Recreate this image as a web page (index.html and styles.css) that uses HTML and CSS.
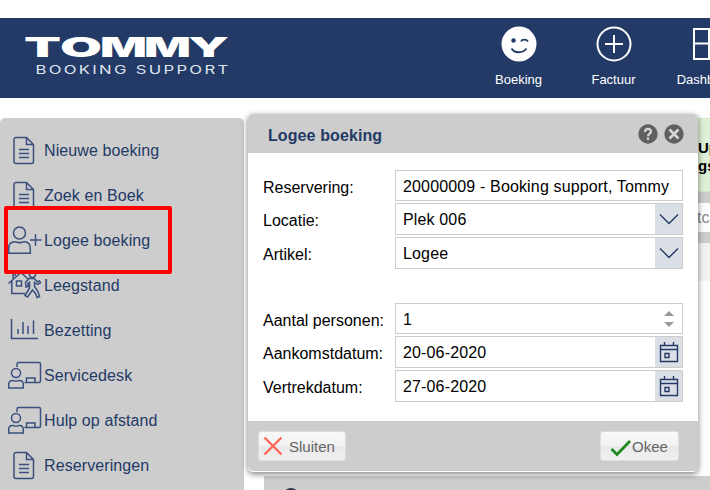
FILE: index.html
```html
<!DOCTYPE html>
<html lang="nl">
  <head>
    <meta charset="UTF-8" />
    <meta name="viewport" content="width=device-width, initial-scale=1.0" />
    <title>Tommy Booking Support</title>
    <link rel="stylesheet" href="styles.css">
  </head>
  <body>
    <svg class="sprite">
      <symbol id="icon-doc" viewBox="0 0 34 34">
        <path d="M18.500 3.500H8a2 2 0 0 0-2 2v22a2 2 0 0 0 2 2h15.500a2 2 0 0 0 2-2V10.500zM18.500 3.500v7h7M11 15.500h10M11 19.500h10M11 23.500h10" />
      </symbol>
      <symbol id="icon-guest" viewBox="0 0 34 34">
        <circle cx="11.500" cy="9" r="6" />
        <path d="M.7 29.300v-4.500c0-5.500 2.500-7 6-7 2 0 3 1 4.800 1s2.800-1 4.800-1c3.500 0 6 1.500 6 7v4.500zM22 16h11.500M27.500 10.300v11.500" />
      </symbol>
      <symbol id="icon-house" viewBox="0 0 34 34">
        <path d="M.5 14.500L13 3.500l7 6.500M3.800 12v12.500H17M8.500 12h5v5h-5zM5 9.500V6h3" />
        <circle cx="24.500" cy="5.500" r="3" />
        <path d="M21 9.500l-3.500 4 .5 4.500 2-.5v-3l1.500-1V19l-4.500 7.500 2.500 1.500 5-7 3 3.500 1.500 4 2.500-1-1.500-5-3.500-5v-4l3 2 3-1.500-1-2-2 .8-3.500-3.300z" />
      </symbol>
      <symbol id="icon-chart" viewBox="0 0 34 34">
        <path d="M3.500 5v19.500h26.500M10 15v5M15 8v12M20 12v8M25.500 6.500V20" />
      </symbol>
      <symbol id="icon-desk" viewBox="0 0 34 34">
        <path d="M9 8V5a1.500 1.500 0 0 1 1.500-1.500H31A1.500 1.500 0 0 1 32.500 5v17a1.500 1.500 0 0 1-1.500 1.500H16.500M18.500 23v-4h8.500v4" />
        <circle cx="8" cy="14" r="4.500" />
        <path d="M.7 29v-3.500c0-3 1.500-4 4-4 1.500 0 2 .7 3.300.7s1.800-.7 3.300-.7c2.500 0 4 1 4 4V29z" />
      </symbol>
      <symbol id="icon-calendar" viewBox="0 0 20 22">
        <path d="M1.500 4.500h17v16h-17zM1 8.500h18M5.500 1v3M14.500 1v3M6 12.500h4v4H6z" />
      </symbol>
    </svg>

    <header class="topbar">
      <svg class="logo" viewBox="0 0 210 42">
        <text class="logo-name" y="21"><tspan x="4" textLength="37" lengthAdjust="spacingAndGlyphs">T</tspan><tspan x="40" textLength="42" lengthAdjust="spacingAndGlyphs">O</tspan><tspan x="80" textLength="47" lengthAdjust="spacingAndGlyphs">M</tspan><tspan x="124" textLength="47" lengthAdjust="spacingAndGlyphs">M</tspan><tspan x="168" textLength="41" lengthAdjust="spacingAndGlyphs">Y</tspan></text>
        <text class="logo-sub" x="15.500" y="38.300" textLength="195" lengthAdjust="spacingAndGlyphs">BOOKING SUPPORT</text>
      </svg>
      <nav class="topnav">
        <a class="topnav-item">
          <svg width="36" height="36" viewBox="0 0 36 36">
            <circle cx="18" cy="18" r="17.500" fill="#fff" />
            <circle cx="12.500" cy="14.500" r="2.200" fill="#233a66" />
            <path d="M20 15.500c1-2.400 5.500-2.400 7 0M10.500 22.500c3 5 11.500 5 15 0" fill="none" stroke="#233a66" stroke-width="1.800" />
          </svg>
          <span>Boeking</span>
        </a>
        <a class="topnav-item">
          <svg width="36" height="36" viewBox="0 0 36 36">
            <circle cx="18" cy="18" r="16.500" fill="none" stroke="#fff" stroke-width="2" />
            <path d="M18 9v18M9 18h18" fill="none" stroke="#fff" stroke-width="2" />
          </svg>
          <span>Factuur</span>
        </a>
        <a class="topnav-item">
          <svg width="36" height="36" viewBox="0 0 36 36">
            <path d="M3 3h30v30H3zM18 3v30M3 17.500h30" fill="none" stroke="#fff" stroke-width="2" />
          </svg>
          <span>Dashboard</span>
        </a>
      </nav>
    </header>

    <div class="page">
      <aside class="sidebar">
        <a class="menu-item"><svg><use href="#icon-doc" /></svg>Nieuwe boeking</a>
        <a class="menu-item"><svg><use href="#icon-doc" /></svg>Zoek en Boek</a>
        <a class="menu-item"><svg><use href="#icon-guest" /></svg>Logee boeking</a>
        <a class="menu-item"><svg><use href="#icon-house" /></svg>Leegstand</a>
        <a class="menu-item"><svg><use href="#icon-chart" /></svg>Bezetting</a>
        <a class="menu-item"><svg><use href="#icon-desk" /></svg>Servicedesk</a>
        <a class="menu-item"><svg><use href="#icon-desk" /></svg>Hulp op afstand</a>
        <a class="menu-item"><svg><use href="#icon-doc" /></svg>Reserveringen</a>
        <div class="highlight"></div>
      </aside>

      <main class="content">
        <div class="notice">Up<br>gs</div>
        <div class="filter"><div class="filter-input">tc</div></div>
        <div class="subbar"></div>
        <div class="panel"><span class="panel-icon"></span></div>
      </main>
    </div>

    <form class="dialog">
      <div class="dialog-header">
        <h2 class="dialog-title">Logee boeking</h2>
        <svg class="dialog-tool" viewBox="0 0 20 20">
          <circle cx="10" cy="10" r="9.700" fill="#606060" />
          <path d="M7 8c0-4 6-4 6-.6 0 2.200-3 2.200-3 4.800M10 13.600v2.400" fill="none" stroke="#d8d8d8" stroke-width="2.200" />
        </svg>
        <svg class="dialog-tool" viewBox="0 0 20 20">
          <circle cx="10" cy="10" r="9.700" fill="#606060" />
          <path d="M5.500 5.500l9 9M14.500 5.500l-9 9" fill="none" stroke="#d8d8d8" stroke-width="2.600" />
        </svg>
      </div>
      <div class="dialog-body">
        <div class="field field-text">
          <label>Reservering:</label>
          <div class="field-box"><span>20000009 - Booking support, Tommy</span></div>
        </div>
        <div class="field">
          <label>Locatie:</label>
          <div class="field-box"><span>Plek 006</span>
            <i class="trigger"><svg width="20" height="12" viewBox="0 0 20 12"><path d="M1 1.500l9 9 9-9" /></svg></i>
          </div>
        </div>
        <div class="field">
          <label>Artikel:</label>
          <div class="field-box"><span>Logee</span>
            <i class="trigger"><svg width="20" height="12" viewBox="0 0 20 12"><path d="M1 1.500l9 9 9-9" /></svg></i>
          </div>
        </div>
        <div class="field field-text field-spaced">
          <label>Aantal personen:</label>
          <div class="field-box"><span>1</span>
            <i class="spinner"></i>
          </div>
        </div>
        <div class="field">
          <label>Aankomstdatum:</label>
          <div class="field-box"><span>20-06-2020</span>
            <i class="trigger"><svg width="20" height="22"><use href="#icon-calendar" /></svg></i>
          </div>
        </div>
        <div class="field">
          <label>Vertrekdatum:</label>
          <div class="field-box"><span>27-06-2020</span>
            <i class="trigger"><svg width="20" height="22"><use href="#icon-calendar" /></svg></i>
          </div>
        </div>
      </div>
      <div class="dialog-footer">
        <button type="button" class="button button-close">
          <svg width="20" height="20" viewBox="0 0 20 20"><path d="M1.500 1.500l17 17M18.500 1.500l-17 17" fill="none" stroke="#ff6557" stroke-width="2.300" /></svg>
          Sluiten
        </button>
        <button type="button" class="button button-ok">
          <svg width="22" height="18" viewBox="0 0 22 18"><path d="M1.500 10l5.500 5.500L20 2" fill="none" stroke="#1f8a1f" stroke-width="2.800" /></svg>
          Okee
        </button>
      </div>
    </form>
  </body>
</html>
```

FILE: styles.css
```css
* {
  box-sizing: border-box;
}

body {
  position: relative;
  margin: 0;
  padding-top: 18px;
  width: 710px;
  height: 490px;
  overflow: hidden;
  font-family: "Liberation Sans", Arial, sans-serif;
  font-size: 16px;
  background: #fff;
}

.sprite {
  display: none;
}

/* top bar */
.topbar {
  display: flex;
  height: 80px;
  background: #233a66;
}

.logo {
  flex: none;
  width: 210px;
  height: 42px;
  margin: 18px 0 0 20px;
  overflow: visible;
  fill: #fff;
}

.logo-name {
  font-family: Inter, "Open Sans", sans-serif;
  font-size: 27px;
  font-weight: 900;
}

.logo-sub {
  font-family: Inter, sans-serif;
  font-size: 11.5px;
  letter-spacing: 1.6px;
  fill: #dfe4ee;
}

.topnav {
  display: flex;
  flex: none;
  margin-left: 241px;
}

.topnav-item {
  display: flex;
  flex-direction: column;
  align-items: center;
  width: 95px;
  padding-top: 8px;
  gap: 10px;
  color: #fff;
  font-size: 13px;
  line-height: 15px;
}

/* page */
.page {
  display: flex;
  height: 372px;
  margin-top: 20px;
}

.sidebar {
  position: relative;
  flex: none;
  width: 244px;
  padding: 10px 0 0 8px;
  background: #cdcdcd;
  border-radius: 5px 5px 0 0;
}

.menu-item {
  display: flex;
  align-items: center;
  gap: 2px;
  height: 45px;
  color: #233a66;
  letter-spacing: 0.1px;
}

.menu-item svg {
  width: 34px;
  height: 34px;
  fill: none;
  stroke: #3a4f7e;
  stroke-width: 1.5;
}

.highlight {
  position: absolute;
  left: 4px;
  top: 88px;
  width: 168px;
  height: 68px;
  border: 4px solid #f00;
  border-radius: 2px;
}

.content {
  flex: 1;
  display: flex;
  flex-direction: column;
  margin-left: 20px;
}

.notice {
  height: 74px;
  padding: 20px 0 0 433px;
  border: 1px solid #d0e6c2;
  background: #dff0d8;
  font-size: 15px;
  font-weight: bold;
  line-height: 18px;
}

.filter {
  height: 51px;
  padding: 11px 0;
  background: #cdcdcd;
}

.filter-input {
  height: 29px;
  padding-left: 433px;
  background: #fff;
  color: #888;
  line-height: 30px;
}

.subbar {
  height: 38px;
  background: #f3f3f3;
}

.panel {
  height: 14px;
  margin-top: auto;
  padding: 12px 0 0 19px;
  overflow: hidden;
  background: #cdcdcd;
}

.panel-icon {
  display: block;
  width: 16px;
  height: 16px;
  border-radius: 50%;
  background: #30384c;
}

/* dialog */
.dialog {
  position: absolute;
  left: 248px;
  top: 114px;
  width: 450px;
  height: 358px;
  border-bottom: 1px solid #fff;
  border-radius: 5px;
  background: #fff;
  box-shadow: 0 2px 6px rgba(0, 0, 0, 0.5);
}

.dialog-header {
  display: flex;
  align-items: center;
  gap: 6px;
  height: 39px;
  padding: 0 14px 0 20px;
  background: #cdcdcd;
  border-radius: 5px 5px 0 0;
}

.dialog-title {
  flex: 1;
  margin: 4px 0 0;
  color: #233a66;
  font-size: 16px;
  letter-spacing: 0.1px;
  line-height: 20px;
}

.dialog-tool {
  width: 20px;
  height: 20px;
}

.dialog-body {
  display: flex;
  flex-direction: column;
  gap: 2px;
  height: 268px;
  padding: 17px 15px 0;
}

.field {
  display: flex;
  height: 32px;
}

.field-text {
  height: 31px;
}

.field-spaced {
  margin-top: 32px;
}

.field label {
  width: 132px;
  line-height: 36px;
  white-space: nowrap;
}

.field-box {
  display: flex;
  flex: 1;
  border: 1px solid #ccc;
  background: #fff;
}

.field-box span {
  flex: 1;
  padding-left: 7px;
  letter-spacing: 0.15px;
  line-height: 31px;
  white-space: nowrap;
}

.trigger {
  display: flex;
  align-items: center;
  justify-content: center;
  width: 27px;
  background: #dadfe6;
}

.trigger svg {
  fill: none;
  stroke: #233a66;
  stroke-width: 1.4;
}

.spinner {
  display: flex;
  flex-direction: column;
  align-items: center;
  justify-content: center;
  gap: 6px;
  width: 27px;
}

.spinner::before,
.spinner::after {
  content: "";
  width: 0;
  border: 5px solid transparent;
}

.spinner::before {
  border-top: 0;
  border-bottom-color: #999;
}

.spinner::after {
  border-bottom: 0;
  border-top-color: #999;
}

.dialog-footer {
  display: flex;
  align-items: center;
  justify-content: space-between;
  height: 50px;
  padding: 0 19px 0 10px;
  background: #cdcdcd;
  border-radius: 0 0 3px 5px;
}

.button {
  display: flex;
  align-items: center;
  height: 30px;
  border: 1px solid #ddd;
  border-radius: 3px;
  background: linear-gradient(#f8f8f8, #f3f3f3 48%, #e8e8e8 52%, #f1f1f1);
  color: #666;
  font-family: inherit;
  font-size: 15px;
}

.button-close {
  width: 88px;
  gap: 6px;
  padding: 0 0 0 4px;
}

.button-ok {
  width: 79px;
  padding: 0 0 0 9px;
}

.button-ok svg {
  margin-top: 4px;
}
```
